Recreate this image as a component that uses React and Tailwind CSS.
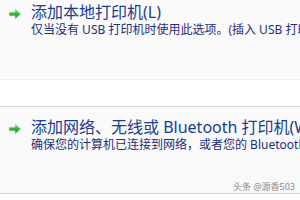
import React from 'react';

const font = { fontFamily: '"Segoe UI", "Noto Sans", "Noto Sans CJK SC", sans-serif' };

// green command-link arrow
const Arrow = () => (
  <svg width="14" height="12" viewBox="0 0 14 12" className="shrink-0">
    <defs>
      <linearGradient id="ag" x1="0" y1="0" x2="0" y2="1">
        <stop offset="0" stopColor="#7fe07a" />
        <stop offset="0.5" stopColor="#2fb53a" />
        <stop offset="1" stopColor="#16852a" />
      </linearGradient>
    </defs>
    <path
      d="M1 4 H7 V0.8 L12.8 6 L7 11.2 V8 H1 Z"
      fill="url(#ag)"
      stroke="#c9f0c4"
      strokeWidth="0.8"
      strokeLinejoin="round"
    />
  </svg>
);

const CommandLink = ({ title, desc, className }) => (
  <div className={`flex items-start pl-[8px] ${className}`}>
    <div className="mt-[5px] w-[14px]">
      <Arrow />
    </div>
    <div className="ml-[9px] whitespace-nowrap">
      <div className="text-[16px] leading-[18px] text-[#1a3d92]">{title}</div>
      <div className="text-[12px] leading-[18px] text-[#1d2f7a]">{desc}</div>
    </div>
  </div>
);

export default function App() {
  return (
    <div className="relative w-[300px] h-[200px] bg-white overflow-hidden" style={font}>
      <CommandLink
        className="h-[80px] pt-[3px] bg-[#fafafa] border-b border-[#ececec]"
        title="添加本地打印机(L)"
        desc="仅当没有 USB 打印机时使用此选项。(插入 USB 打印机时，Windows 会自动安装它。)"
      />
      <div className="h-[27px] border-b border-[#d6d6d6]" />
      <CommandLink
        className="h-[87px] pt-[11px] bg-[#f9f9f9] border-b border-[#cfcfcf]"
        title="添加网络、无线或 Bluetooth 打印机(W)"
        desc="确保您的计算机已连接到网络，或者您的 Bluetooth 或无线打印机已启用。"
      />
      <div className="absolute right-[5px] bottom-[8px] text-[9px] leading-[10px] text-[#8a8a8a] whitespace-nowrap">
        头条 @源香503
      </div>
    </div>
  );
}
